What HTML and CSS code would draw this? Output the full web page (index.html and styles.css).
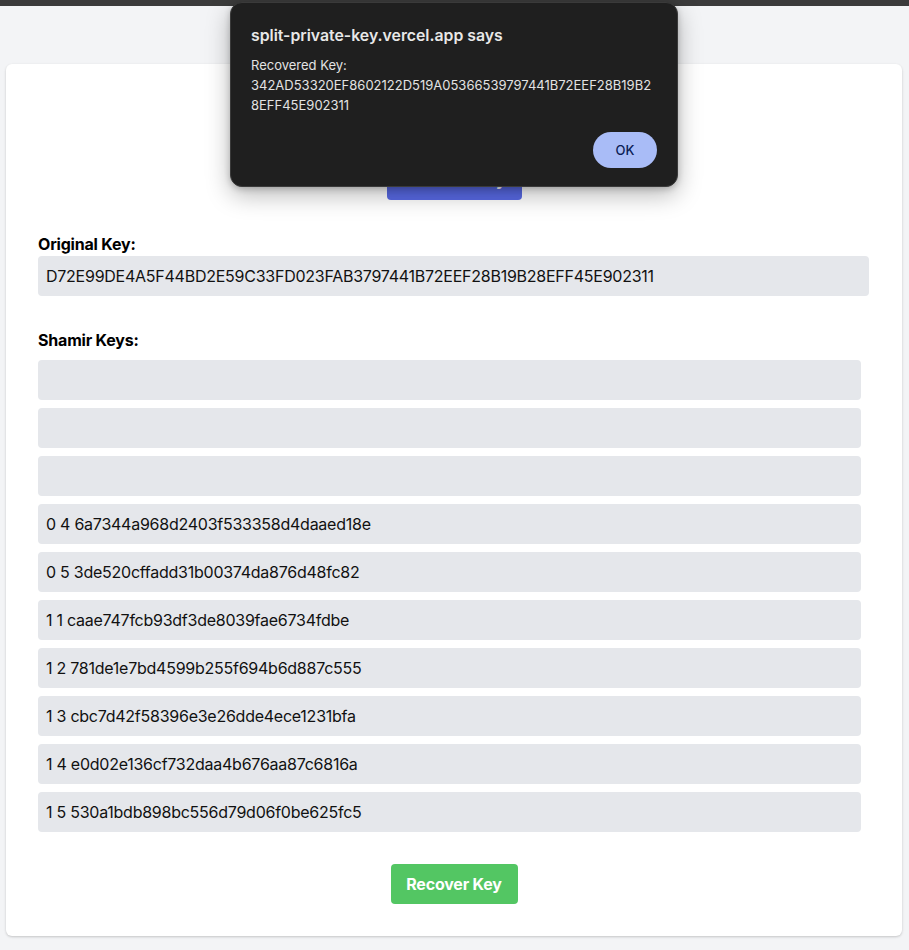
FILE: index.html
```html
<!DOCTYPE html>
<html lang="en">
<head>
<meta charset="utf-8">
<title>Split Private Key</title>
<link rel="stylesheet" href="styles.css">
</head>
<body>
<div class="topbar"></div>
<main class="page">
  <section class="card">
    <h1 class="title">Split Private Key</h1>
    <div class="center">
      <button class="btn btn-blue">Generate Key</button>
    </div>
    <div class="field">
      <label class="label">Original Key:</label>
      <div class="input wide">D72E99DE4A5F44BD2E59C33FD023FAB3797441B72EEF28B19B28EFF45E902311</div>
    </div>
    <div class="field shamir">
      <label class="label label-gap">Shamir Keys:</label>
      <div class="list">
        <div class="input"></div>
        <div class="input"></div>
        <div class="input"></div>
        <div class="input">0 4 6a7344a968d2403f533358d4daaed18e</div>
        <div class="input">0 5 3de520cffadd31b00374da876d48fc82</div>
        <div class="input">1 1 caae747fcb93df3de8039fae6734fdbe</div>
        <div class="input">1 2 781de1e7bd4599b255f694b6d887c555</div>
        <div class="input">1 3 cbc7d42f58396e3e26dde4ece1231bfa</div>
        <div class="input">1 4 e0d02e136cf732daa4b676aa87c6816a</div>
        <div class="input">1 5 530a1bdb898bc556d79d06f0be625fc5</div>
      </div>
    </div>
    <div class="center">
      <button class="btn btn-green">Recover Key</button>
    </div>
  </section>
</main>
<div class="dialog" role="alertdialog">
  <div class="dialog-title">split-private-key.vercel.app says</div>
  <div class="dialog-body">Recovered Key:<br>342AD53320EF8602122D519A05366539797441B72EEF28B19B2<br>8EFF45E902311</div>
  <div class="dialog-actions">
    <button class="ok">OK</button>
  </div>
</div>
</body>
</html>
```

FILE: styles.css
```css
* { box-sizing: border-box; }
html, body { margin: 0; padding: 0; }
body {
  background: #f3f4f6;
  font-family: Inter, "Noto Sans", "Liberation Sans", sans-serif;
  color: #111;
  min-height: 950px;
}
.topbar {
  height: 6px;
  background: #3b3b3b;
}
.page {
  padding: 58px 7px 0 6px;
}
.card {
  background: #fff;
  border-radius: 6px;
  box-shadow: 0 1px 3px rgba(0,0,0,0.12), 0 1px 2px rgba(0,0,0,0.08);
  padding: 32px;
  height: 872px;
}
.title {
  margin: 0 0 32px;
  font-size: 24px;
  line-height: 32px;
  text-align: center;
  font-weight: 700;
}
.center {
  display: flex;
  justify-content: center;
}
.btn {
  border: 0;
  border-radius: 4px;
  height: 40px;
  padding: 0;
  font-family: inherit;
  font-size: 16px;
  font-weight: 700;
  color: #fff;
  white-space: nowrap;
  letter-spacing: -0.2px;
}
.btn-blue {
  background: #5869e4;
  width: 135px;
}
.btn-green {
  background: #53c663;
  width: 127px;
}
.field {
  margin-top: 32px;
}
.label {
  display: block;
  font-size: 16px;
  line-height: 24px;
  font-weight: 700;
  color: #000;
  letter-spacing: -0.2px;
}
.label-gap { margin-bottom: 8px; }
.input {
  height: 40px;
  background: #e5e7eb;
  border-radius: 4px;
  padding: 0 8px;
  font-size: 16px;
  line-height: 40px;
  color: #111;
  width: 823px;
  white-space: nowrap;
  letter-spacing: -0.25px;
}
.input.wide { width: 831px; }
.list {
  display: flex;
  flex-direction: column;
  gap: 8px;
}
.shamir { margin-bottom: 32px; }

.dialog {
  position: absolute;
  left: 230px;
  top: 2px;
  width: 448px;
  height: 185px;
  background: #1f1f1f;
  border: 1px solid #3a3a3a;
  border-radius: 12px;
  box-shadow: 0 8px 24px rgba(0,0,0,0.28), 0 2px 6px rgba(0,0,0,0.2);
  padding: 23px 20px 20px 20px;
  color: #e6e6e6;
}
.dialog-title {
  font-size: 15.8px;
  font-weight: 600;
  line-height: 20px;
  color: #e8e8e8;
}
.dialog-body {
  margin-top: 9px;
  font-size: 13px;
  line-height: 20px;
  color: #e3e3e3;
}
.dialog-actions {
  display: flex;
  justify-content: flex-end;
  margin-top: 17px;
}
.ok {
  width: 64px;
  height: 36px;
  border: 0;
  border-radius: 18px;
  background: #a9bcf7;
  color: #0b1d56;
  font-family: inherit;
  font-size: 13px;
  font-weight: 500;
}
```
